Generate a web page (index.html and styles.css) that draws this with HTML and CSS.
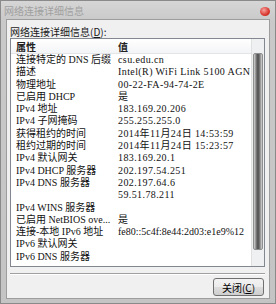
FILE: index.html
```html
<!DOCTYPE html>
<html lang="zh-CN">
<head>
    <meta charset="UTF-8">
    <title>网络连接详细信息</title>
    <link rel="stylesheet" href="styles.css">
</head>
<body>
<div class="window">
    <div class="titlebar">
        <span class="title">网络连接详细信息</span>
        <span class="close-btn"></span>
    </div>
    <div class="client">
        <div class="label">网络连接详细信息(<u>D</u>):</div>
        <div class="listbox">
            <div class="list-main">
                <div class="list-header">
                    <span class="col-prop">属性</span>
                    <span class="col-val">值</span>
                </div>
                <div class="rows">
                    <div class="row"><span class="col-prop">连接特定的 DNS 后缀</span><span class="col-val">csu.edu.cn</span></div>
                    <div class="row"><span class="col-prop">描述</span><span class="col-val">Intel(R) WiFi Link 5100 AGN</span></div>
                    <div class="row"><span class="col-prop">物理地址</span><span class="col-val">00-22-FA-94-74-2E</span></div>
                    <div class="row"><span class="col-prop">已启用 DHCP</span><span class="col-val">是</span></div>
                    <div class="row"><span class="col-prop">IPv4 地址</span><span class="col-val">183.169.20.206</span></div>
                    <div class="row"><span class="col-prop">IPv4 子网掩码</span><span class="col-val">255.255.255.0</span></div>
                    <div class="row"><span class="col-prop">获得租约的时间</span><span class="col-val">2014年11月24日 14:53:59</span></div>
                    <div class="row"><span class="col-prop">租约过期的时间</span><span class="col-val">2014年11月24日 15:23:57</span></div>
                    <div class="row"><span class="col-prop">IPv4 默认网关</span><span class="col-val">183.169.20.1</span></div>
                    <div class="row"><span class="col-prop">IPv4 DHCP 服务器</span><span class="col-val">202.197.54.251</span></div>
                    <div class="row"><span class="col-prop">IPv4 DNS 服务器</span><span class="col-val">202.197.64.6</span></div>
                    <div class="row"><span class="col-prop"></span><span class="col-val">59.51.78.211</span></div>
                    <div class="row"><span class="col-prop">IPv4 WINS 服务器</span><span class="col-val"></span></div>
                    <div class="row"><span class="col-prop">已启用 NetBIOS ove...</span><span class="col-val">是</span></div>
                    <div class="row"><span class="col-prop">连接-本地 IPv6 地址</span><span class="col-val tight">fe80::5c4f:8e44:2d03:e1e9%12</span></div>
                    <div class="row"><span class="col-prop">IPv6 默认网关</span><span class="col-val"></span></div>
                    <div class="row"><span class="col-prop">IPv6 DNS 服务器</span><span class="col-val"></span></div>
                </div>
            </div>
            <div class="scrollbar">
                <div class="thumb"></div>
            </div>
        </div>
        <div class="separator"></div>
        <div class="footer">
            <button class="close-button">关闭(<u>C</u>)</button>
        </div>
    </div>
</div>
</body>
</html>
```

FILE: styles.css
```css
body {
    margin: 0;
    font-family: "Liberation Serif", "Noto Sans CJK SC", serif;
    font-size: 10px;
    color: #000;
    background: #fff;
}

.window {
    width: 276px;
    height: 304px;
    box-sizing: border-box;
    border: 1px solid #8a8a8a;
    background: linear-gradient(#d6d6d6, #c9c9c9 20px, #c4c4c4);
    display: flex;
    flex-direction: column;
}

.titlebar {
    height: 18px;
    display: flex;
    align-items: center;
    justify-content: space-between;
    padding: 0 5px 0 3px;
}

.title {
    color: #a0a0a0;
    font-family: "Noto Sans CJK SC", sans-serif;
    font-size: 10px;
}

.close-btn {
    width: 10px;
    height: 9px;
    border-radius: 50%;
    background: radial-gradient(circle at 40% 35%, #f6a4a0, #d9342b 60%, #a8231c);
    margin-top: 2px;
}

.client {
    flex: 1;
    margin: 0 5px 4px 5px;
    background: #f0f0f0;
    border: 1px solid #9d9d9d;
    padding: 5px 4px 0 3px;
    display: flex;
    flex-direction: column;
}

.label {
    font-family: "Noto Sans CJK SC", sans-serif;
    font-size: 10px;
    height: 13px;
    line-height: 13px;
    color: #1a1a1a;
}

.label u, .close-button u {
    text-decoration: underline;
}

.listbox {
    height: 229px;
    border: 1px solid #828790;
    background: #fff;
    display: flex;
    box-sizing: border-box;
}

.list-main {
    flex: 1;
    overflow: hidden;
}

.list-header {
    height: 15px;
    display: flex;
    align-items: center;
    background: linear-gradient(#ffffff, #f3f4f6);
    border-bottom: 1px solid #e3e5e8;
    box-sizing: border-box;
    font-family: "Noto Sans CJK SC", sans-serif;
    font-weight: bold;
    color: #222;
}

.col-prop {
    width: 102px;
    padding-left: 5px;
    flex-shrink: 0;
    white-space: nowrap;
}

.col-val {
    white-space: nowrap;
}

.row .col-val {
    letter-spacing: 0.4px;
}

.row .col-val.tight {
    letter-spacing: 0;
}

.row {
    display: flex;
    height: 12.3px;
    line-height: 12.3px;
    color: #111;
}

.scrollbar {
    width: 10px;
    background: #eef0f2;
    border-left: 1px solid #e0e0e0;
    padding: 14px 1px 16px 1px;
    display: flex;
}

.thumb {
    flex: 1;
    border: 1px solid #8e8f8f;
    border-radius: 2px;
    background: linear-gradient(90deg, #d6d6d6, #5a5a5a 40%, #5a5a5a 60%, #d6d6d6);
}

.separator {
    margin-top: 6px;
    border-top: 1px solid #a0a0a0;
    border-bottom: 1px solid #ffffff;
}

.footer {
    display: flex;
    justify-content: flex-end;
    padding: 3px 1px 0 0;
}

.close-button {
    width: 51px;
    height: 18px;
    border: 1px solid #707070;
    border-radius: 3px;
    background: linear-gradient(#f2f2f2, #ebebeb 50%, #dddddd 51%, #cfcfcf);
    font-family: "Noto Sans CJK SC", sans-serif;
    font-size: 10px;
    color: #000;
    padding: 0;
}
```
